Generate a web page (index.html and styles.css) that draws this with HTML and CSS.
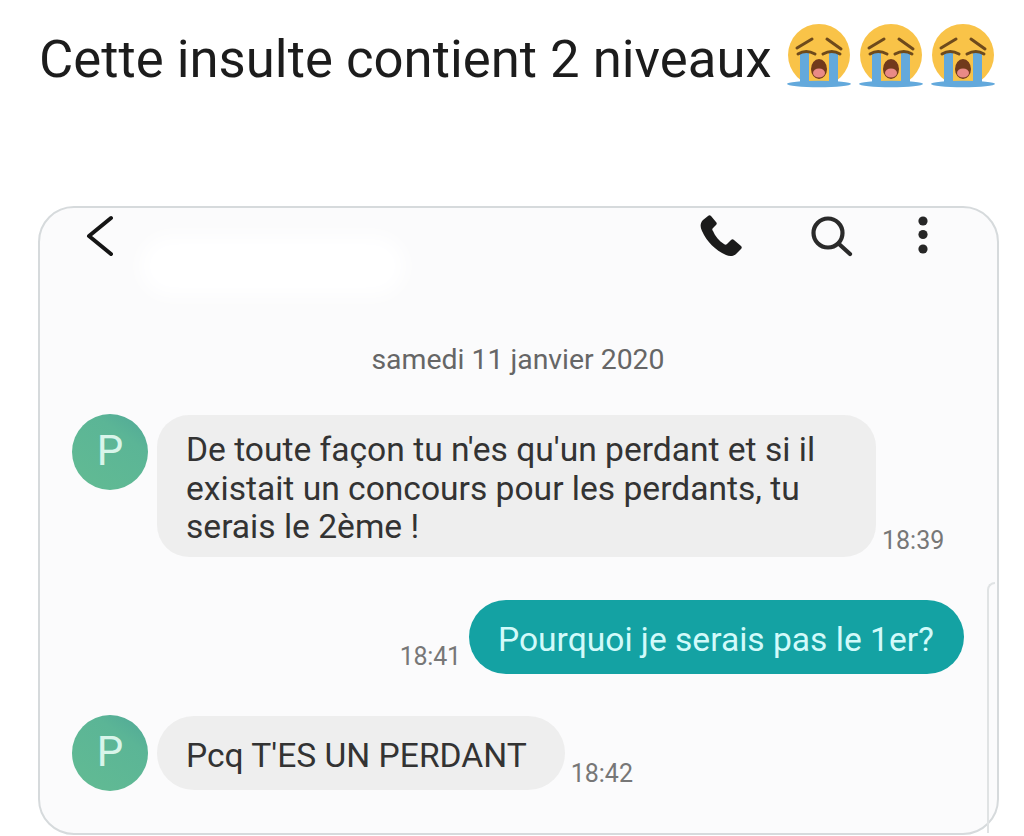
FILE: index.html
```html
<!DOCTYPE html>
<html lang="fr">
<head>
  <meta charset="UTF-8" />
  <title>Cette insulte contient 2 niveaux</title>
  <link rel="stylesheet" href="styles.css">
</head>
<body>
  <svg class="defs" width="0" height="0">
    <symbol id="crying" viewBox="0 0 64 64">
      <circle cx="32" cy="31" r="31" fill="#f9c348"/>
      <path d="M10 24 L25 15 M40 15 L54 25" stroke="#6e4a1c" stroke-width="3" stroke-linecap="round" fill="none"/>
      <rect x="13" y="29" width="9" height="31" fill="#63a9dc"/>
      <rect x="42" y="29" width="9" height="31" fill="#63a9dc"/>
      <path d="M11 30 Q19 25 28 30 M36 30 Q45 25 53 30" stroke="#6e4a1c" stroke-width="3" stroke-linecap="round" fill="none"/>
      <ellipse cx="32" cy="45" rx="8" ry="10" fill="#713a1c"/>
      <ellipse cx="32" cy="49" rx="6" ry="4.5" fill="#e98a86"/>
      <ellipse cx="32" cy="60" rx="32" ry="3.2" fill="#63a9dc"/>
    </symbol>
  </svg>

  <header class="title">
    <h1>Cette insulte contient 2 niveaux</h1>
    <div class="emojis">
      <svg class="emoji"><use href="#crying"/></svg>
      <svg class="emoji"><use href="#crying"/></svg>
      <svg class="emoji"><use href="#crying"/></svg>
    </div>
  </header>

  <main class="phone">
    <div class="blur-patch"></div>
    <div class="scroll-line"></div>

    <div class="topbar">
      <svg class="icon back" viewBox="0 0 30 44">
        <path d="M25 4 L3 22 L25 40" fill="none" stroke="#151515" stroke-width="4" stroke-linecap="round" stroke-linejoin="round"/>
      </svg>
      <div class="actions">
        <svg class="icon call" viewBox="0 0 42 42">
          <path d="M8 1 L3 5 C0 8 0 12 2 16 C7 27 15 35 26 40 C30 42 34 41 36 39 L41 34 C42 33 42 32 41 31 L34 25 C33 24 32 24 31 25 L27 29 C26 30 25 30 24 29 C19 26 15 21 13 16 C12 15 12 14 13 13 L16 10 C17 9 17 8 16 7 L11 1 C10 0 9 0 8 1 Z" fill="#1b1b1b"/>
        </svg>
        <svg class="icon search" viewBox="0 0 44 44">
          <circle cx="19" cy="19" r="14.500" fill="none" stroke="#2a2a2a" stroke-width="4.200"/>
          <path d="M30 30 L41 40" stroke="#2a2a2a" stroke-width="4.200" stroke-linecap="round"/>
        </svg>
        <svg class="icon more" viewBox="0 0 12 42">
          <circle cx="6" cy="6" r="4.600" fill="#262626"/>
          <circle cx="6" cy="19.500" r="4.600" fill="#262626"/>
          <circle cx="6" cy="34" r="4.600" fill="#262626"/>
        </svg>
      </div>
    </div>

    <div class="date">samedi 11 janvier 2020</div>

    <div class="msg in first">
      <div class="avatar">P</div>
      <div class="bubble wide">De toute façon tu n'es qu'un perdant et si il existait un concours pour les perdants, tu serais le 2ème !</div>
      <span class="time">18:39</span>
    </div>

    <div class="msg out">
      <span class="time">18:41</span>
      <div class="bubble">Pourquoi je serais pas le 1er?</div>
    </div>

    <div class="msg in last">
      <div class="avatar">P</div>
      <div class="bubble">Pcq T'ES UN PERDANT</div>
      <span class="time">18:42</span>
    </div>
  </main>
</body>
</html>
```

FILE: styles.css
```css
html, body { height: 100%; }
body {
  margin: 0;
  background: #fff;
  font-family: "Roboto", "Liberation Sans", sans-serif;
  color: #333;
  overflow: hidden;
}
.defs { position: absolute; }

.title {
  height: 206px;
  box-sizing: border-box;
  padding: 24px 0 0 39px;
  display: flex;
  align-items: flex-start;
}
.title h1 {
  margin: 0;
  font-size: 52.7px;
  line-height: 70px;
  font-weight: 400;
  color: #1c1c1c;
  white-space: nowrap;
}
.emojis {
  display: flex;
  gap: 8px;
  margin-left: 15px;
}
.emoji { width: 64px; height: 64px; }

.phone {
  position: relative;
  box-sizing: border-box;
  width: 961px;
  height: 629px;
  margin-left: 38px;
  border: 2px solid #d6dadc;
  border-radius: 36px;
  background: #fbfbfc;
  padding: 0 33px 0 32px;
}
.blur-patch {
  position: absolute;
  left: 100px;
  top: 28px;
  width: 265px;
  height: 60px;
  border-radius: 40px;
  background: #fff;
  filter: blur(10px);
}
.scroll-line {
  position: absolute;
  right: 2px;
  top: 374px;
  bottom: 0;
  width: 6px;
  border-left: 2px solid #e0e3e4;
  border-top: 2px solid #e0e3e4;
  border-top-left-radius: 12px;
}

.topbar {
  position: relative;
  display: flex;
  justify-content: space-between;
  align-items: center;
  height: 56px;
  padding: 0 35px 0 14px;
}
.icon { display: block; }
.back { width: 30px; height: 44px; }
.actions { display: flex; align-items: center; }
.call { width: 42px; height: 42px; }
.search { width: 44px; height: 44px; margin-left: 67px; }
.more { width: 12px; height: 42px; margin-left: 64px; }

.date {
  margin-top: 81px;
  text-align: center;
  font-size: 28.4px;
  line-height: 30px;
  color: #666;
}

.msg { display: flex; align-items: flex-end; }
.first { margin-top: 39px; }
.out { margin-top: 42px; justify-content: flex-end; }
.last { margin-top: 41px; }

.avatar {
  width: 76px;
  height: 76px;
  flex: none;
  align-self: flex-start;
  border-radius: 50%;
  margin-right: 9px;
  background: linear-gradient(215deg, #4fa797 0%, #5bb596 30%, #62bb93 100%);
  color: #d8f5ea;
  font-size: 42px;
  line-height: 74px;
  text-align: center;
}
.bubble {
  box-sizing: border-box;
  min-height: 74px;
  padding: 21px 38px 15px 29px;
  border-radius: 37px;
  background: #eeeeee;
  font-size: 33.6px;
  line-height: 38px;
  color: #333;
  white-space: nowrap;
}
.in .bubble { margin: 1px 0; }
.in .wide {
  width: 719px;
  padding: 16px 29px 10.5px;
  border-radius: 32px;
  line-height: 38.5px;
  white-space: normal;
}
.time {
  font-size: 25px;
  line-height: 28px;
  color: #777;
  margin: 0 0 3px 6px;
}
.out .time { margin: 0 8px 3px 0; letter-spacing: -0.2px; }
.out .bubble {
  padding: 21px 30px 15px 29px;
  background: #14a2a3;
  color: #d2fafa;
}
```
